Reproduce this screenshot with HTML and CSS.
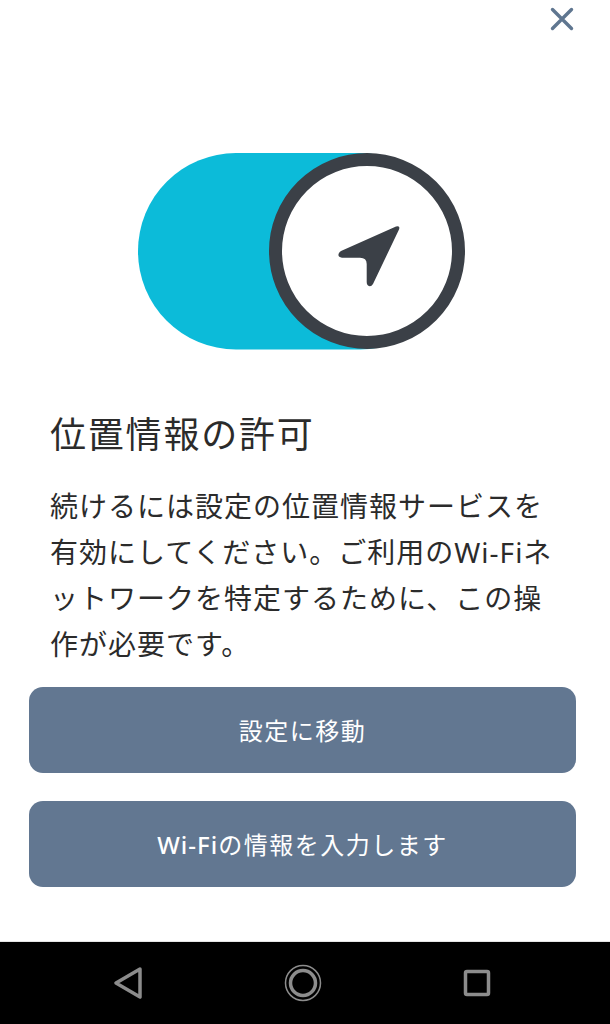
FILE: index.html
```html
<!DOCTYPE html>
<html lang="ja">
<head>
  <meta charset="UTF-8">
  <title>位置情報の許可</title>
  <link rel="stylesheet" href="styles.css">
</head>
<body>

<div class="screen">
  <div class="topbar">
    <svg class="close" width="24" height="24" viewBox="0 0 24 24">
      <path d="M2.5 2.5 L21.5 21.5 M21.5 2.5 L2.5 21.5"/>
    </svg>
  </div>

  <svg class="toggle" width="328" height="197" viewBox="0 0 328 197">
    <rect class="pill" x="0" y="0" width="320" height="196.5" rx="98"/>
    <circle class="knob" cx="229" cy="98" r="91.5"/>
    <path class="arrow" d="M258 73.5 Q262.5 72 261 76.5 L235 131 Q232.5 135 229.5 132 Q228.7 131 228.7 129 L228.7 111 Q228.7 104.7 222 104.7 L204 104.7 Q199 104 201 100 Q201.5 98.8 203 98 Z"/>
  </svg>

  <div class="message">
    <h1>位置情報の許可</h1>
    <p>続けるには設定の位置情報サービスを有効にしてください。ご利用のWi-Fiネットワークを特定するために、この操作が必要です。</p>
  </div>

  <div class="actions">
    <button class="btn">設定に移動</button>
    <button class="btn"><span class="latin">Wi-Fi</span>の情報を入力します</button>
  </div>
</div>

<div class="navbar">
  <svg class="nav-icon" width="30" height="34" viewBox="0 0 30 34">
    <path d="M27 3 L3 17 L27 31 Z"/>
  </svg>
  <svg class="nav-icon" width="38" height="38" viewBox="0 0 38 38">
    <circle cx="19" cy="19" r="12.5"/>
    <circle class="thin" cx="19" cy="19" r="17.5"/>
  </svg>
  <svg class="nav-icon" width="28" height="28" viewBox="0 0 28 28">
    <rect x="2.5" y="2.5" width="23" height="23" rx="1.5"/>
  </svg>
</div>

</body>
</html>
```

FILE: styles.css
```css
* {
  box-sizing: border-box;
}
body {
  margin: 0;
  background-color: #ffffff;
  font-family: "Noto Sans", "Noto Sans CJK JP", sans-serif;
}
.screen {
  height: 942px;
  padding: 0 34px 54px 29px;
  display: flex;
  flex-direction: column;
  border-bottom: 1px solid #e4e4e4;
}
.topbar {
  display: flex;
  justify-content: flex-end;
  padding-top: 7px;
  margin-right: 2px;
}
.close path {
  fill: none;
  stroke: #5f7690;
  stroke-width: 3.4;
  stroke-linecap: round;
}
.toggle {
  display: block;
  margin: 122px 0 0 109px;
}
.pill {
  fill: #0cbbd9;
}
.knob {
  fill: #ffffff;
  stroke: #3b4047;
  stroke-width: 13;
}
.arrow {
  fill: #3b4047;
}
.message {
  padding: 0 10px 0 21px;
  color: #2b2b2b;
}
h1 {
  margin: 59px 0 0;
  font-size: 36px;
  font-weight: 400;
  letter-spacing: 1.8px;
  line-height: 52px;
}
p {
  margin: 22px 0 0;
  font-size: 28px;
  letter-spacing: 1px;
  line-height: 46px;
}
.actions {
  margin-top: auto;
  display: flex;
  flex-direction: column;
  gap: 28px;
}
.btn {
  height: 86px;
  padding: 0 0 2px;
  border: none;
  border-radius: 14px;
  background-color: #627791;
  color: #ffffff;
  font-family: inherit;
  font-size: 24px;
  letter-spacing: 1.5px;
}
.latin {
  font-weight: 500;
  letter-spacing: 1px;
}
.navbar {
  height: 82px;
  background-color: #000000;
  display: flex;
  justify-content: space-between;
  align-items: center;
  padding: 0 119px 0 113px;
}
.nav-icon * {
  fill: none;
  stroke: #8c8c8c;
  stroke-width: 3.5;
  stroke-linejoin: round;
}
.nav-icon .thin {
  stroke-width: 1.5;
}
```
